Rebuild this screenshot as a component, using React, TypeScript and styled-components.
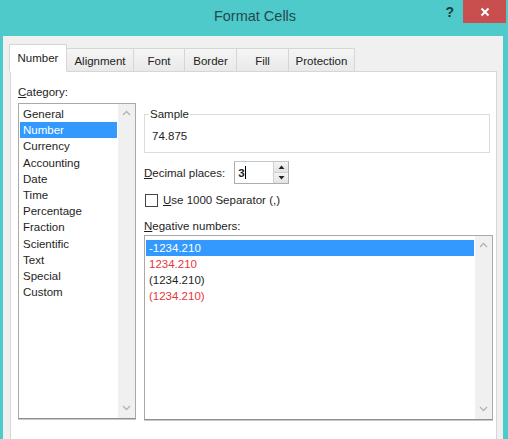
import React from 'react';
import styled, {createGlobalStyle} from 'styled-components';

const GlobalStyle = createGlobalStyle`
  html, body {
    margin: 0;
    padding: 0;
    background: #4ecaca;
  }
  body {
    font-family: "Liberation Sans", Arial, sans-serif;
    font-size: 11px;
    color: #1e1e1e;
  }
`

const Window = styled.div`
  width: 508px;
  height: 439px;
  background: #4ecaca;
  display: flex;
  flex-direction: column;
  overflow: hidden;
`
const TitleBar = styled.div`
  height: 36px;
  display: flex;
  align-items: flex-start;
  flex-shrink: 0;
`
const TitleText = styled.div`
  flex: 1;
  text-align: center;
  padding-left: 82px;
  padding-top: 8px;
  font-size: 14.5px;
  color: #24494a;
`
const HelpButton = styled.div`
  width: 26px;
  padding: 4px 9px 0 0;
  font-size: 14px;
  font-weight: bold;
  color: #1f3a3c;
  text-align: right;
`
const CloseButton = styled.div`
  width: 43px;
  height: 23px;
  margin-right: 2px;
  background: #c94f4f;
  color: #fff;
  display: flex;
  align-items: center;
  justify-content: center;
`
const Body = styled.div`
  flex: 1;
  margin: 0 5px 0 3px;
  background: #f0f0f0;
  padding: 8px 6px 0 6px;
  display: flex;
  flex-direction: column;
`
const TabRow = styled.div`
  display: flex;
  align-items: flex-end;
  height: 28px;
  margin-bottom: -1px;
  position: relative;
  z-index: 1;
`
const Tab = styled.div<{ $active?: boolean; $w: number }>`
  width: ${p => p.$w}px;
  height: ${p => (p.$active ? 28 : 24)}px;
  box-sizing: border-box;
  border: 1px solid #d6d6d6;
  border-bottom: ${p => (p.$active ? '1px solid #fff' : '1px solid #d6d6d6')};
  border-left-width: ${p => (p.$active ? 1 : 0)}px;
  background: ${p => (p.$active ? '#fff' : 'linear-gradient(#f5f5f5, #e9e9e9)')};
  display: flex;
  align-items: center;
  justify-content: center;
  font-size: 11.5px;
  color: #222;
  padding-top: ${p => (p.$active ? 0 : 1)}px;
`
const Panel = styled.div`
  flex: 1;
  margin-left: 1px;
  width: 487px;
  box-sizing: border-box;
  background: #fff;
  border: 1px solid #d6d6d6;
  border-bottom: none;
  display: flex;
  padding: 13px 0 0 7px;
  gap: 8px;
`
const LeftCol = styled.div`
  width: 118px;
  display: flex;
  flex-direction: column;
`
const RightCol = styled.div`
  width: 349px;
  display: flex;
  flex-direction: column;
`
const Label = styled.div<{ $mt?: number }>`
  font-size: 11.5px;
  height: 14px;
  line-height: 14px;
  margin-top: ${p => p.$mt || 0}px;
  white-space: nowrap;
`
const U = styled.span`
  text-decoration: underline;
`
const ListBox = styled.div<{ $h: number; $mt: number }>`
  height: ${p => p.$h}px;
  margin-top: ${p => p.$mt}px;
  box-sizing: border-box;
  border: 1px solid #a9a9a9;
  border-bottom-color: #8f8f8f;
  box-shadow: 0 1px 0 #c8c8c8;
  display: flex;
  background: #fff;
`
const ListItems = styled.div<{ $pt: number }>`
  flex: 1;
  padding: ${p => p.$pt}px 1px 0 1px;
  display: flex;
  flex-direction: column;
`
const Item = styled.div<{ $selected?: boolean; $red?: boolean; $h: number }>`
  height: ${p => p.$h}px;
  line-height: ${p => p.$h}px;
  padding-left: 3px;
  font-size: 11.5px;
  white-space: nowrap;
  background: ${p => (p.$selected ? '#3399ff' : 'transparent')};
  color: ${p => (p.$selected ? '#fff' : p.$red ? '#e8353a' : '#1e1e1e')};
`
const ScrollBar = styled.div`
  width: 17px;
  background: #f0f0f0;
  display: flex;
  flex-direction: column;
  justify-content: space-between;
  align-items: center;
  padding: 6px 0 7px;
`
const Group = styled.fieldset`
  margin: 0;
  padding: 2px 0 8px 7px;
  border: 1px solid #dcdcdc;
  height: 45px;
  box-sizing: border-box;
  margin-top: 23px;
  width: 346px;
`
const Legend = styled.legend`
  font-size: 11.5px;
  padding: 0 1px;
  margin-left: -3px;
`
const SampleValue = styled.div`
  font-size: 11.5px;
  padding-top: 8px;
`
const DecimalRow = styled.div`
  display: flex;
  align-items: center;
  margin-top: 8px;
  gap: 9px;
`
const SpinInput = styled.div`
  width: 55px;
  height: 23px;
  box-sizing: border-box;
  border: 1px solid #abadb3;
  border-top-color: #c5c5c5;
  display: flex;
  background: #fff;
`
const SpinText = styled.div`
  flex: 1;
  display: flex;
  align-items: center;
  padding-left: 3px;
  font-size: 11.5px;
  font-weight: bold;
`
const Caret = styled.span`
  display: inline-block;
  width: 1px;
  height: 13px;
  background: #000;
`
const SpinButtons = styled.div`
  width: 14px;
  display: flex;
  flex-direction: column;
  border-left: 1px solid #d0d0d0;
`
const SpinBtn = styled.div`
  flex: 1;
  background: linear-gradient(#f4f4f4, #e3e3e3);
  display: flex;
  align-items: center;
  justify-content: center;
  &:first-child {
    border-bottom: 1px solid #cfcfcf;
  }
`
const CheckRow = styled.div`
  display: flex;
  align-items: center;
  margin-top: 9px;
  gap: 5px;
  margin-left: 1px;
`
const CheckBox = styled.div`
  width: 13px;
  height: 13px;
  box-sizing: border-box;
  border: 1px solid #444;
  background: #fff;
`

const Chevron: React.FC<{ up?: boolean }> = ({up}) => (
  <svg width="9" height="6" viewBox="0 0 9 6">
    <path d={up ? 'M1 5 L4.5 1.5 L8 5' : 'M1 1 L4.5 4.5 L8 1'} fill="none" stroke="#b3b3b3" strokeWidth="1.3"/>
  </svg>
)

const Arrow: React.FC<{ up?: boolean }> = ({up}) => (
  <svg width="7" height="4" viewBox="0 0 7 4">
    <path d={up ? 'M0.5 4 L3.5 0.5 L6.5 4 Z' : 'M0.5 0 L3.5 3.5 L6.5 0 Z'} fill="#222"/>
  </svg>
)

const categories = ['General', 'Number', 'Currency', 'Accounting', 'Date', 'Time', 'Percentage',
  'Fraction', 'Scientific', 'Text', 'Special', 'Custom'];

const negatives = [
  {text: '-1234.210', red: false},
  {text: '1234.210', red: true},
  {text: '(1234.210)', red: false},
  {text: '(1234.210)', red: true},
];

const tabs = [
  {name: 'Number', w: 58},
  {name: 'Alignment', w: 67},
  {name: 'Font', w: 51},
  {name: 'Border', w: 52},
  {name: 'Fill', w: 52},
  {name: 'Protection', w: 66},
];

export default function App() {
  return (
    <Window>
      <GlobalStyle/>
      <TitleBar>
        <TitleText>Format Cells</TitleText>
        <HelpButton>?</HelpButton>
        <CloseButton>
          <svg width="10" height="10" viewBox="0 0 10 10">
            <path d="M1.5 1.5 L8.5 8.5 M8.5 1.5 L1.5 8.5" stroke="#fff" strokeWidth="2"/>
          </svg>
        </CloseButton>
      </TitleBar>
      <Body>
        <TabRow>
          {tabs.map((t, i) => (
            <Tab key={`tab-${i}`} $active={i === 0} $w={t.w}>{t.name}</Tab>
          ))}
        </TabRow>
        <Panel>
          <LeftCol>
            <Label><U>C</U>ategory:</Label>
            <ListBox $h={316} $mt={4}>
              <ListItems $pt={2}>
                {categories.map((c, i) => (
                  <Item key={`cat-${i}`} $h={16.2} $selected={i === 1}>{c}</Item>
                ))}
              </ListItems>
              <ScrollBar>
                <Chevron up/>
                <Chevron/>
              </ScrollBar>
            </ListBox>
          </LeftCol>
          <RightCol>
            <Group>
              <Legend>Sample</Legend>
              <SampleValue>74.875</SampleValue>
            </Group>
            <DecimalRow>
              <Label><U>D</U>ecimal places:</Label>
              <SpinInput>
                <SpinText>3<Caret/></SpinText>
                <SpinButtons>
                  <SpinBtn><Arrow up/></SpinBtn>
                  <SpinBtn><Arrow/></SpinBtn>
                </SpinButtons>
              </SpinInput>
            </DecimalRow>
            <CheckRow>
              <CheckBox/>
              <Label><U>U</U>se 1000 Separator (,)</Label>
            </CheckRow>
            <Label $mt={12}><U>N</U>egative numbers:</Label>
            <ListBox $h={185} $mt={2}>
              <ListItems $pt={4}>
                {negatives.map((n, i) => (
                  <Item key={`neg-${i}`} $h={16} $selected={i === 0} $red={n.red}>{n.text}</Item>
                ))}
              </ListItems>
              <ScrollBar>
                <Chevron up/>
                <Chevron/>
              </ScrollBar>
            </ListBox>
          </RightCol>
        </Panel>
      </Body>
    </Window>
  );
}
